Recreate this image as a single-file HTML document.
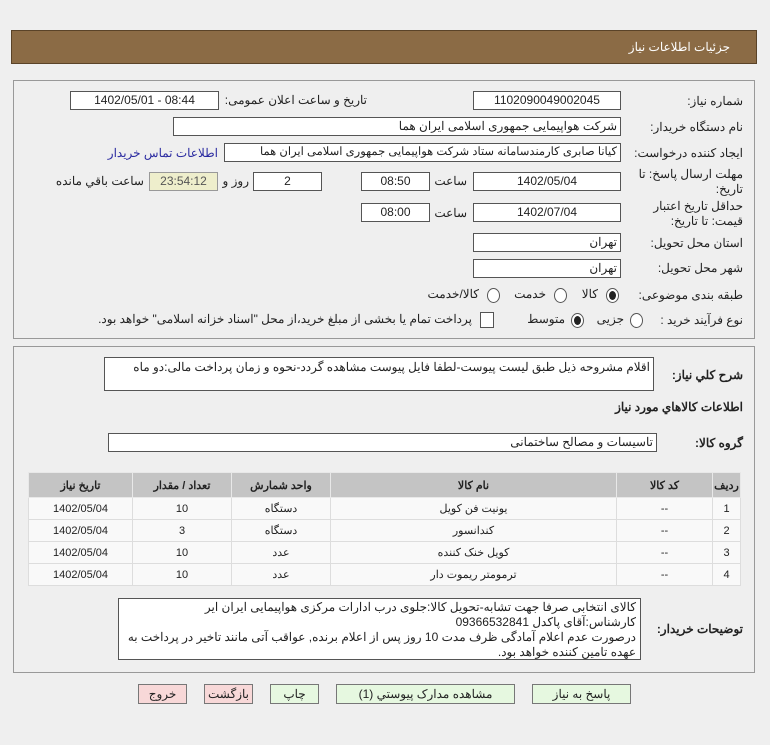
<!DOCTYPE html>
<html><head><meta charset="utf-8"><style>
body{margin:0;width:770px;height:745px;background:#efefef;font-family:"Liberation Sans","Noto Sans CJK SC",sans-serif;font-size:12px;color:#222;position:relative;overflow:hidden}
.a{position:absolute;white-space:nowrap}
.hdr{left:11px;top:30px;width:746px;height:34px;background:#8b6b45;border:1px solid #5a4328;box-sizing:border-box}
.panel{position:absolute;border:1px solid #999;box-sizing:border-box;background:#efefef}
.in{position:absolute;background:#fff;border:1px solid #555;box-sizing:border-box;height:19px;line-height:17px;text-align:center;font-size:12px;white-space:nowrap;overflow:hidden}
.r{text-align:right;padding-right:3px}
.lbl{position:absolute;direction:rtl;text-align:right;font-size:12px;white-space:nowrap}
.rad{position:absolute;width:11px;height:13px;border:1px solid #555;border-radius:50%;background:#fff}
.rad.on::after{content:"";position:absolute;left:2px;top:2px;width:7px;height:9px;border-radius:50%;background:#222}
table{position:absolute;left:28px;top:472px;width:713px;border-collapse:collapse;direction:rtl;font-size:11px;table-layout:fixed}
td,th{border:1px solid #ddd;text-align:center;height:21px;padding:0;white-space:nowrap;overflow:hidden}
th{background:#c4c4c4;height:24px;border-color:#e8e8e8;font-weight:bold}
td{background:#f9f9f9}
.btn{position:absolute;top:684px;height:20px;border:1px solid #777;box-sizing:border-box;text-align:center;line-height:18px;font-size:12px}
</style></head><body>
<div class="a hdr"></div>
<div class="lbl" style="right:40px;top:40px;color:#fff;font-size:12px">جزئیات اطلاعات نیاز</div>

<div class="panel" style="left:13px;top:80px;width:742px;height:259px"></div>
<div class="lbl" style="right:27px;top:94px">شماره نیاز:</div>
<div class="in" style="left:473px;top:91px;width:148px">1102090049002045</div>
<div class="lbl" style="right:403px;top:93px">تاریخ و ساعت اعلان عمومی:</div>
<div class="in" style="left:70px;top:91px;width:149px">1402/05/01 - 08:44</div>

<div class="lbl" style="right:27px;top:120px">نام دستگاه خریدار:</div>
<div class="in r" style="left:173px;top:117px;width:448px;direction:rtl">شرکت هواپیمایی جمهوری اسلامی ایران هما</div>

<div class="lbl" style="right:27px;top:146px">ایجاد کننده درخواست:</div>
<div class="in r" style="left:224px;top:143px;width:397px;direction:rtl;font-size:11.5px">کیانا صابری کارمندسامانه ستاد شرکت هواپیمایی جمهوری اسلامی ایران هما</div>
<div class="lbl" style="right:552px;top:146px;color:#2a2aa0">اطلاعات تماس خریدار</div>

<div class="lbl" style="right:27px;top:167px;line-height:15px">مهلت ارسال پاسخ: تا<br>تاریخ:</div>
<div class="in" style="left:473px;top:172px;width:148px">1402/05/04</div>
<div class="lbl" style="right:303px;top:174px">ساعت</div>
<div class="in" style="left:361px;top:172px;width:69px">08:50</div>
<div class="in" style="left:253px;top:172px;width:69px">2</div>
<div class="lbl" style="right:521px;top:174px">روز و</div>
<div class="in" style="left:149px;top:172px;width:69px;background:#eeeecc;border-color:#999;color:#555">23:54:12</div>
<div class="lbl" style="right:626px;top:174px">ساعت باقي مانده</div>

<div class="lbl" style="right:27px;top:199px;line-height:15px">حداقل تاریخ اعتبار<br>قیمت: تا تاریخ:</div>
<div class="in" style="left:473px;top:203px;width:148px">1402/07/04</div>
<div class="lbl" style="right:303px;top:206px">ساعت</div>
<div class="in" style="left:361px;top:203px;width:69px">08:00</div>

<div class="lbl" style="right:27px;top:236px">استان محل تحویل:</div>
<div class="in r" style="left:473px;top:233px;width:148px;direction:rtl">تهران</div>
<div class="lbl" style="right:27px;top:261px">شهر محل تحویل:</div>
<div class="in r" style="left:473px;top:259px;width:148px;direction:rtl">تهران</div>

<div class="lbl" style="right:27px;top:288px">طبقه بندی موضوعی:</div>
<div class="rad on" style="left:606px;top:288px"></div><div class="lbl" style="right:172px;top:287px">کالا</div>
<div class="rad" style="left:554px;top:288px"></div><div class="lbl" style="right:224px;top:287px">خدمت</div>
<div class="rad" style="left:487px;top:288px"></div><div class="lbl" style="right:291px;top:287px">کالا/خدمت</div>

<div class="lbl" style="right:27px;top:313px">نوع فرآیند خرید :</div>
<div class="rad" style="left:630px;top:313px"></div><div class="lbl" style="right:146px;top:312px">جزیی</div>
<div class="rad on" style="left:571px;top:313px"></div><div class="lbl" style="right:205px;top:312px">متوسط</div>
<div style="position:absolute;left:480px;top:312px;width:12px;height:14px;border:1px solid #555;background:#fff"></div>
<div class="lbl" style="right:298px;top:312px">پرداخت تمام یا بخشی از مبلغ خرید،از محل "اسناد خزانه اسلامی" خواهد بود.</div>

<div class="panel" style="left:13px;top:346px;width:742px;height:327px"></div>
<div class="lbl" style="right:27px;top:368px;font-weight:bold">شرح کلي نیاز:</div>
<div class="in r" style="left:104px;top:357px;width:550px;height:34px;text-align:right;direction:rtl;line-height:18px">اقلام مشروحه ذیل طبق لیست پیوست-لطفا فایل پیوست مشاهده گردد-نحوه و زمان پرداخت مالی:دو ماه</div>
<div class="lbl" style="right:27px;top:400px;font-weight:bold">اطلاعات کالاهاي مورد نياز</div>
<div class="lbl" style="right:27px;top:436px;font-weight:bold">گروه کالا:</div>
<div class="in r" style="left:108px;top:433px;width:549px;direction:rtl">تاسیسات و مصالح ساختمانی</div>

<table>
<colgroup><col style="width:28px"><col style="width:96px"><col style="width:286px"><col style="width:99px"><col style="width:99px"><col></colgroup>
<tr><th>ردیف</th><th>کد کالا</th><th>نام کالا</th><th>واحد شمارش</th><th>تعداد / مقدار</th><th>تاریخ نیاز</th></tr>
<tr><td>1</td><td>--</td><td>یونیت فن کویل</td><td>دستگاه</td><td>10</td><td>1402/05/04</td></tr>
<tr><td>2</td><td>--</td><td>کندانسور</td><td>دستگاه</td><td>3</td><td>1402/05/04</td></tr>
<tr><td>3</td><td>--</td><td>کویل خنک کننده</td><td>عدد</td><td>10</td><td>1402/05/04</td></tr>
<tr><td>4</td><td>--</td><td>ترمومتر ریموت دار</td><td>عدد</td><td>10</td><td>1402/05/04</td></tr>
</table>

<div class="lbl" style="right:27px;top:622px;font-weight:bold">توضیحات خریدار:</div>
<div class="in" style="left:118px;top:598px;width:523px;height:62px;text-align:right;direction:rtl;padding:1px 4px;line-height:15px;white-space:normal">کالای انتخابی صرفا جهت تشابه-تحویل کالا:جلوی درب ادارات مرکزی هواپیمایی ایران ایر<br>کارشناس:آقای پاکدل 09366532841<br>درصورت عدم اعلام آمادگی ظرف مدت 10 روز پس از اعلام برنده, عواقب آتی مانند تاخیر در پرداخت به عهده تامین کننده خواهد بود.</div>

<div class="btn" style="left:532px;width:99px;background:#e6f8e0">پاسخ به نیاز</div>
<div class="btn" style="left:336px;width:179px;background:#e6f8e0">مشاهده مدارک پیوستي (1)</div>
<div class="btn" style="left:270px;width:49px;background:#e6f8e0">چاپ</div>
<div class="btn" style="left:204px;width:49px;background:#f8d8d8">بازگشت</div>
<div class="btn" style="left:138px;width:49px;background:#f8d8d8">خروج</div>
</body></html>
